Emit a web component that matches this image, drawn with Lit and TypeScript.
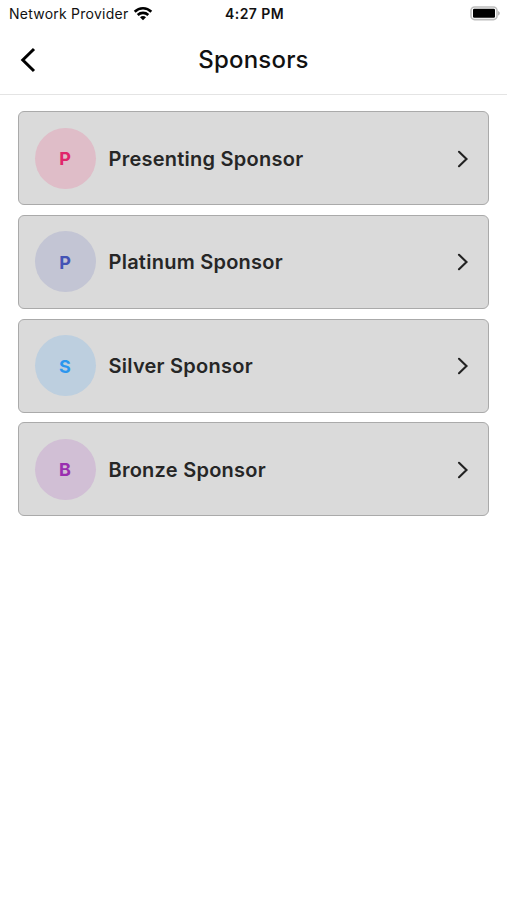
import { LitElement, html, css } from "lit";
import { customElement, property } from "lit/decorators.js";

interface Tier { name: string; color: string; tint: string; }

const tiers: Tier[] = [
  { name: "Presenting Sponsor", color: "#e0266b", tint: "#dfbdc8" },
  { name: "Platinum Sponsor", color: "#4353b5", tint: "#c3c5d4" },
  { name: "Silver Sponsor", color: "#2b96ee", tint: "#bdcfdf" },
  { name: "Bronze Sponsor", color: "#9a2fb0", tint: "#d1bfd5" },
];

@customElement("status-bar")
class StatusBar extends LitElement {
  static styles = css`
    :host { display: grid; grid-template-columns: 1fr auto 1fr; align-items: center; height: 27px; padding: 0 7px 0 9px; color: #111; font-size: 14px; }
    .carrier { display: flex; align-items: center; gap: 5px; white-space: nowrap; letter-spacing: 0.24px; }
    .time { font-weight: 600; letter-spacing: 0.42px; }
    .battery { justify-self: end; }
    svg { display: block; }
  `;
  render() {
    return html`
      <div class="carrier"><span>Network Provider</span>
        <svg width="20" height="15" viewBox="0 0 20 15" fill="none" stroke="#000" stroke-width="2.6">
          <path d="M1.7 5.7C6.4 1.1 13.6 1.1 18.3 5.7" /><path d="M4.7 9c3-2.8 7.6-2.8 10.6 0" />
          <path d="M10 14.2 7 11.2c1.7-1.5 4.3-1.5 6 0Z" fill="#000" stroke="none" />
        </svg>
      </div>
      <div class="time">4:27 PM</div>
      <svg class="battery" width="30" height="15" viewBox="0 0 30 15">
        <rect x="1" y="1" width="26" height="12.6" rx="3.6" fill="none" stroke="#bdbdbd" stroke-width="1.6" />
        <rect x="3" y="2.8" width="22" height="9" rx="1.2" fill="#000" />
        <path d="M28.2 5c2 .8 2 3.8 0 4.6Z" fill="#aaa" />
      </svg>`;
  }
}

@customElement("sponsor-card")
class SponsorCard extends LitElement {
  @property({ attribute: false }) tier!: Tier;
  static styles = css`
    :host { display: flex; align-items: center; box-sizing: border-box; height: 94px; padding: 1px 19px 0 16px; border: 1px solid #aaa; border-radius: 6px; background: #dadada; }
    .avatar { display: grid; place-items: center; box-sizing: border-box; width: 61px; height: 61px; margin: -1px 12.5px 0 0; padding: 1px 1px 0 0; border-radius: 50%; font-size: 18px; font-weight: 700; }
    .name { flex: 1; color: #262626; font-size: 20px; font-weight: 600; letter-spacing: 0.25px; }
    svg { display: block; }
  `;
  render() {
    const t = this.tier;
    return html`
      <div class="avatar" style="background:${t.tint};color:${t.color}">${t.name[0]}</div>
      <div class="name">${t.name}</div>
      <svg width="12" height="18" viewBox="0 0 12 18" fill="none" stroke="#222" stroke-width="2.1" stroke-linecap="round"><path d="m2 1.8 7.5 7.2L2 16.2" /></svg>`;
  }
}

@customElement("app-root")
class AppRoot extends LitElement {
  static styles = css`
    :host { display: block; height: 900px; background: #fff; font-family: Inter, sans-serif; }
    header { display: grid; grid-template-columns: 40px 1fr 40px; align-items: center; box-sizing: border-box; height: 68px; padding: 0 19px 2px; border-bottom: 1px solid #e4e4e4; }
    h1 { margin: 0; text-align: center; font-size: 24px; font-weight: 500; letter-spacing: 0.2px; color: #111; }
    main { display: flex; flex-direction: column; gap: 9.7px; padding: 16.3px 18px; }
    svg { display: block; }
  `;
  render() {
    return html`
      <status-bar></status-bar>
      <header>
        <svg width="18" height="26" viewBox="0 0 18 26" fill="none" stroke="#000" stroke-width="3"><path d="M15 2 3.8 13 15 24" /></svg>
        <h1>Sponsors</h1>
      </header>
      <main>${tiers.map((t) => html`<sponsor-card .tier=${t}></sponsor-card>`)}</main>`;
  }
}
